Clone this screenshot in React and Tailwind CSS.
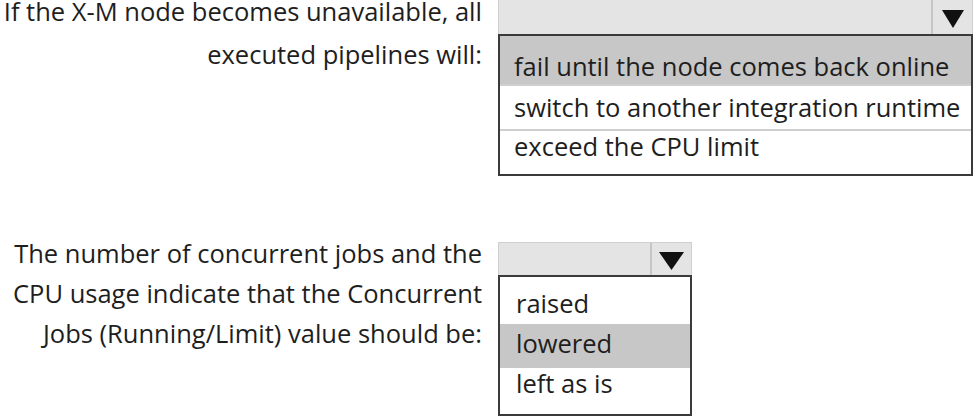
import React from "react";

function Triangle({ w, h }) {
  return (
    <svg width={w} height={h} viewBox={`0 0 ${w} ${h}`} className="block">
      <polygon points={`0,0 ${w},0 ${w / 2},${h}`} fill="#111" />
    </svg>
  );
}

export default function App() {
  return (
    <div
      className="w-[974px] h-[418px] bg-white text-[#1e1e1e] text-[25.5px] overflow-hidden"
      style={{ fontFamily: '"Open Sans", "Noto Sans", sans-serif' }}
    >
      {/* Row 1 */}
      <div className="flex gap-[16px]">
        <div className="w-[482px] mt-[-11px] text-right leading-[44px] whitespace-nowrap">
          <div>If the X-M node becomes unavailable, all</div>
          <div className="mt-[-1px]">executed pipelines will:</div>
        </div>
        <div className="w-[475px] flex flex-col">
          <div className="h-[34px] flex bg-[#e4e4e4] border-l border-r border-[#cfcfcf]">
            <div className="flex-1" />
            <div className="w-[41px] border-l-2 border-[#c6c6c6] flex items-start justify-center pt-[10px]">
              <Triangle w={22} h={18} />
            </div>
          </div>
          <div className="border-2 border-[#3a3a3a] flex flex-col leading-[30px] whitespace-nowrap">
            <div className="bg-[#c7c7c7] pl-[14px] pt-[15px] pb-[3px]">fail until the node comes back online</div>
            <div className="h-[2px] bg-[#cfcfcf]" />
            <div className="pl-[14px] pt-[6px] pb-[7px]">switch to another integration runtime</div>
            <div className="h-[2px] bg-[#cfcfcf]" />
            <div className="pl-[14px] pt-0 pb-[13px]">exceed the CPU limit</div>
          </div>
        </div>
      </div>

      {/* Row 2 */}
      <div className="flex gap-[16px] mt-[57px]">
        <div className="w-[482px] text-right leading-[40px] whitespace-nowrap">
          <div>The number of concurrent jobs and the</div>
          <div>CPU usage indicate that the Concurrent</div>
          <div>Jobs (Running/Limit) value should be:</div>
        </div>
        <div className="w-[194px] mt-[9px] flex flex-col">
          <div className="h-[33px] flex bg-[#e4e4e4] border-l border-r border-t border-[#cfcfcf]">
            <div className="flex-1" />
            <div className="w-[41px] border-l-2 border-[#c6c6c6] flex items-start justify-center pt-[9px]">
              <Triangle w={25} h={18} />
            </div>
          </div>
          <div className="border-2 border-[#3a3a3a] flex flex-col leading-[30px] whitespace-nowrap">
            <div className="pl-[16px] pt-[11px] pb-[6px]">raised</div>
            <div className="bg-[#c7c7c7] pl-[16px] pt-[4px] pb-[10px]">lowered</div>
            <div className="pl-[16px] pt-0 pb-[16px]">left as is</div>
          </div>
        </div>
      </div>
    </div>
  );
}
